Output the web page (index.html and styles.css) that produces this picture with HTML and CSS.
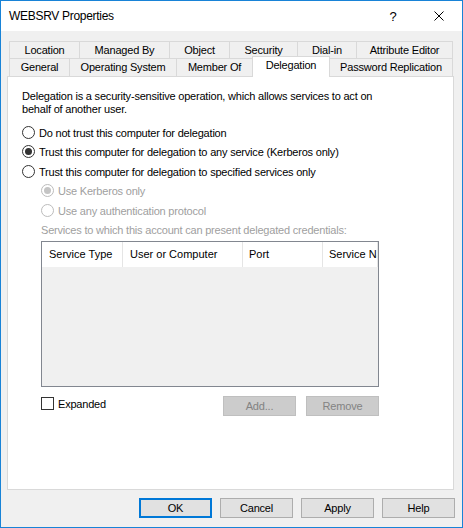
FILE: index.html
```html
<!DOCTYPE html>
<html>
<head>
    <title>WEBSRV Properties</title>
    <link rel="stylesheet" href="styles.css">
</head>
<body>
    <div class="dialog">
        <div class="titlebar">
            <span class="title">WEBSRV Properties</span>
            <div class="caption-btn">?</div>
            <div class="caption-btn">
                <svg width="10" height="10" viewBox="0 0 10 10">
                    <path d="M0.5 0.5L9.5 9.5M9.5 0.5L0.5 9.5" stroke="#000" stroke-width="1" fill="none"/>
                </svg>
            </div>
        </div>

        <div class="client">
            <!-- two rows of tabs, the front row touches the page -->
            <div class="tabs">
                <div class="tab-row row-back">
                    <div class="tab tab-location">Location</div>
                    <div class="tab tab-managed">Managed By</div>
                    <div class="tab tab-object">Object</div>
                    <div class="tab tab-security">Security</div>
                    <div class="tab tab-dialin">Dial-in</div>
                    <div class="tab tab-attr">Attribute Editor</div>
                </div>
                <div class="tab-row row-front">
                    <div class="tab tab-general">General</div>
                    <div class="tab tab-os">Operating System</div>
                    <div class="tab tab-member">Member Of</div>
                    <div class="tab tab-delegation active">Delegation</div>
                    <div class="tab tab-password">Password Replication</div>
                </div>
            </div>

            <div class="panel">
                <p class="desc">Delegation is a security-sensitive operation, which allows services to act on behalf of another user.</p>

                <div class="option">
                    <span class="radio"></span>
                    <span>Do not trust this computer for delegation</span>
                </div>
                <div class="option step">
                    <span class="radio checked"></span>
                    <span>Trust this computer for delegation to any service (Kerberos only)</span>
                </div>
                <div class="option">
                    <span class="radio"></span>
                    <span>Trust this computer for delegation to specified services only</span>
                </div>
                <div class="option step sub disabled">
                    <span class="radio checked"></span>
                    <span>Use Kerberos only</span>
                </div>
                <div class="option sub disabled">
                    <span class="radio"></span>
                    <span>Use any authentication protocol</span>
                </div>

                <div class="list-label">Services to which this account can present delegated credentials:</div>

                <div class="listview">
                    <div class="list-head">
                        <div class="col col-type">Service Type</div>
                        <div class="col col-user">User or Computer</div>
                        <div class="col col-port">Port</div>
                        <div class="col col-name">Service Name</div>
                    </div>
                </div>

                <div class="list-actions">
                    <div class="check-row">
                        <span class="checkbox"></span>
                        <span>Expanded</span>
                    </div>
                    <div class="btn disabled">Add...</div>
                    <div class="btn disabled">Remove</div>
                </div>
            </div>

            <div class="dialog-buttons">
                <div class="btn default">OK</div>
                <div class="btn">Cancel</div>
                <div class="btn">Apply</div>
                <div class="btn">Help</div>
            </div>
        </div>
    </div>
</body>
</html>
```

FILE: styles.css
```css
body {
    margin: 0;
    padding: 0;
    font-family: "Liberation Sans", Arial, sans-serif;
    font-size: 11px;
    letter-spacing: -0.2px;
    color: #000;
    background-color: #fff;
}

.dialog {
    width: 463px;
    height: 528px;
    box-sizing: border-box;
    border: 1px solid #1883d7;
    background-color: #f0f0f0;
}

/* title bar */
.titlebar {
    display: flex;
    align-items: center;
    height: 30px;
    background-color: #fff;
}

.title {
    flex: 1;
    padding-left: 8px;
    font-size: 12px;
    letter-spacing: -0.3px;
}

.caption-btn {
    width: 46px;
    height: 30px;
    display: flex;
    align-items: center;
    justify-content: center;
    font-size: 13px;
}

.client {
    padding: 10px 6px 0 6px;
}

/* tabs */
.tabs {
    margin-left: 2px;
}

.tab-row {
    display: flex;
    align-items: flex-start;
}

.row-back {
    height: 17px;
}

.row-front {
    height: 18px;
}

.tab {
    box-sizing: border-box;
    border: 1px solid #d9d9d9;
    border-bottom: none;
    margin-left: -1px;
    text-align: center;
    background-color: #f0f0f0;
    white-space: nowrap;
}

.tab:first-child {
    margin-left: 0;
}

.row-back .tab {
    height: 17px;
    line-height: 16px;
}

.row-front .tab {
    height: 18px;
    line-height: 17px;
}

.row-front .tab.active {
    position: relative;
    z-index: 1;
    margin-top: -2px;
    height: 21px;
    line-height: 16px;
    background-color: #fff;
}

.tab-location { width: 71px; }
.tab-managed { width: 91px; }
.tab-object { width: 61px; }
.tab-security { width: 69px; }
.tab-dialin { width: 60px; }
.tab-attr { width: 97px; }

.tab-general { width: 61px; }
.tab-os { width: 108px; }
.tab-member { width: 77px; }
.tab-delegation { width: 78px; }
.tab-password { width: 124px; }

/* page */
.panel {
    width: 447px;
    height: 414px;
    box-sizing: border-box;
    border: 1px solid #d9d9d9;
    background-color: #fff;
    padding: 13px 14px 0 14px;
}

.desc {
    margin: 0 0 7px 0;
    width: 360px;
    line-height: 13px;
}

.option {
    display: flex;
    align-items: center;
    gap: 4px;
    height: 19px;
    white-space: nowrap;
}

.option.step {
    margin-bottom: 1px;
}

.option.sub {
    margin-left: 19px;
}

.disabled {
    color: #a0a0a0;
}

.radio {
    position: relative;
    width: 13px;
    height: 13px;
    box-sizing: border-box;
    border: 1px solid #333;
    border-radius: 50%;
    background-color: #fff;
    flex-shrink: 0;
}

.radio.checked::after {
    content: "";
    position: absolute;
    left: 2px;
    top: 2px;
    width: 7px;
    height: 7px;
    border-radius: 50%;
    background-color: #333;
}

.disabled .radio {
    border-color: #bcbcbc;
}

.disabled .radio.checked::after {
    background-color: #c4c4c4;
}

.list-label {
    margin: 4px 0 0 19px;
    line-height: 13px;
    color: #a0a0a0;
}

/* list of services */
.listview {
    margin: 4px 0 0 19px;
    width: 338px;
    height: 146px;
    box-sizing: border-box;
    border: 1px solid #828790;
    background-color: #f0f0f0;
}

.list-head {
    display: flex;
    height: 25px;
    background-color: #fff;
}

.col {
    box-sizing: border-box;
    border-right: 1px solid #e5e5e5;
    padding-left: 7px;
    line-height: 25px;
    letter-spacing: 0;
    white-space: nowrap;
    overflow: hidden;
}

.col-type { width: 81px; }
.col-user { width: 120px; }
.col-port { width: 80px; padding-left: 6px; }
.col-name { width: 55px; padding-left: 6px; }

.list-actions {
    display: flex;
    align-items: flex-start;
    gap: 10px;
    margin: 9px 0 0 19px;
    width: 338px;
}

.check-row {
    flex: 1;
    display: flex;
    align-items: center;
    gap: 4px;
    margin-top: 1px;
    height: 13px;
}

.checkbox {
    width: 13px;
    height: 13px;
    box-sizing: border-box;
    border: 1px solid #333;
    background-color: #fff;
}

/* push buttons */
.btn {
    width: 73px;
    height: 20px;
    box-sizing: border-box;
    border: 1px solid #adadad;
    background-color: #e1e1e1;
    text-align: center;
    line-height: 18px;
}

.btn.default {
    border: 2px solid #0078d7;
    line-height: 16px;
}

.btn.disabled {
    border-color: #bfbfbf;
    background-color: #cccccc;
    color: #838383;
}

.dialog-buttons {
    display: flex;
    justify-content: flex-end;
    gap: 8px;
    margin: 8px 1px 0 0;
}
```
